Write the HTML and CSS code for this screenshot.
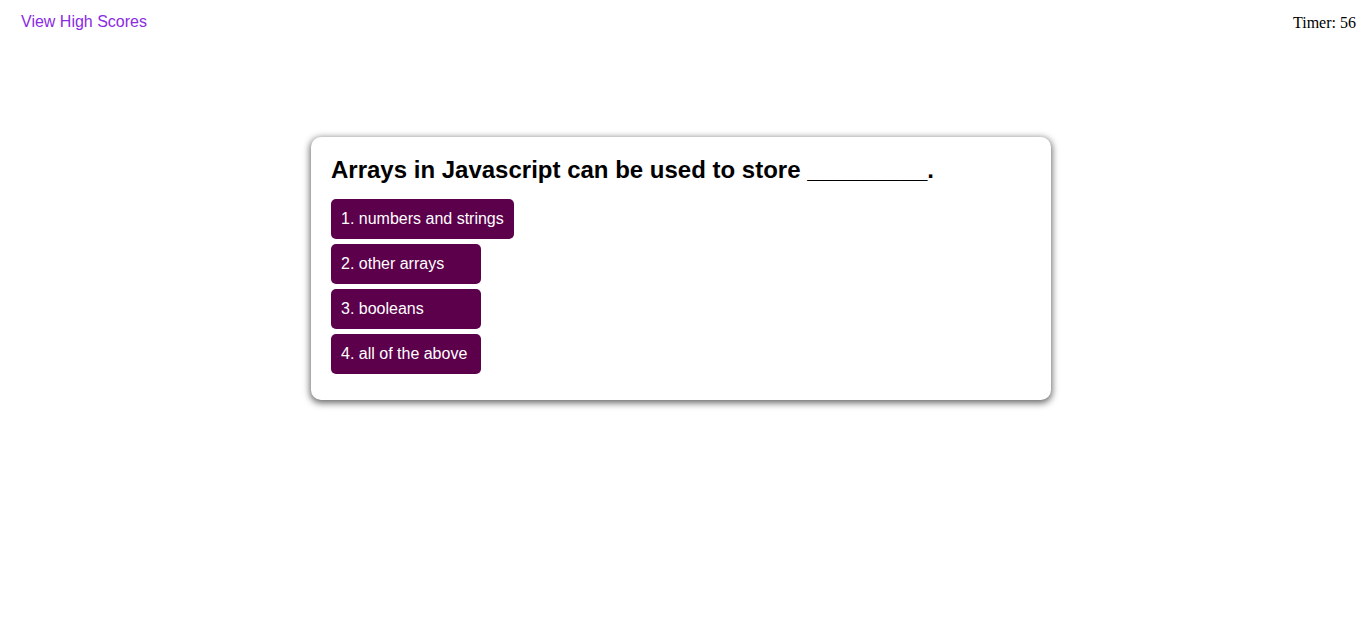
FILE: index.html
```html
<!DOCTYPE html>
<html lang="en">
<head>
<meta charset="utf-8">
<title>Code Quiz</title>
<link rel="stylesheet" href="styles.css">
</head>
<body>
<header class="topbar">
  <a class="scores-link" href="#">View High Scores</a>
  <div class="timer">Timer: 56</div>
</header>
<main class="stage">
  <section class="card">
    <h2 class="question">Arrays in Javascript can be used to store _________.</h2>
    <div class="choices">
      <button class="choice">1. numbers and strings</button>
      <button class="choice">2. other arrays</button>
      <button class="choice">3. booleans</button>
      <button class="choice">4. all of the above</button>
    </div>
  </section>
</main>
</body>
</html>
```

FILE: styles.css
```css
body {
  margin: 8px;
  font-family: "Liberation Serif", serif;
  background: #fff;
}
.topbar {
  display: flex;
  justify-content: space-between;
  align-items: flex-start;
  padding-top: 5px;
}
.scores-link {
  font-family: "Liberation Sans", Arial, sans-serif;
  font-size: 16px;
  color: #8a2be2;
  text-decoration: none;
  padding-left: 13px;
}
.timer {
  font-size: 16px;
  color: #000;
  padding-top: 1px;
}
.stage {
  display: flex;
  justify-content: center;
  padding-top: 105px;
  padding-right: 2px;
  padding-bottom: 20px;
}
.card {
  width: 700px;
  padding: 19px 20px 26px;
  background: #fff;
  border-radius: 10px;
  box-shadow: 0 2px 7px 1px rgba(0, 0, 0, 0.6);
}
.question {
  margin: 0 0 15px;
  font-family: "Liberation Sans", Arial, sans-serif;
  font-size: 24px;
  font-weight: bold;
  color: #000;
}
.choices {
  display: flex;
  flex-direction: column;
  align-items: flex-start;
  gap: 5px;
}
.choice {
  min-width: 150px;
  padding: 11px 10px;
  border: none;
  border-radius: 5px;
  background: #5c004b;
  color: #fff;
  font-family: "Liberation Sans", Arial, sans-serif;
  font-size: 16px;
  line-height: 18px;
  text-align: left;
  cursor: pointer;
}
```
